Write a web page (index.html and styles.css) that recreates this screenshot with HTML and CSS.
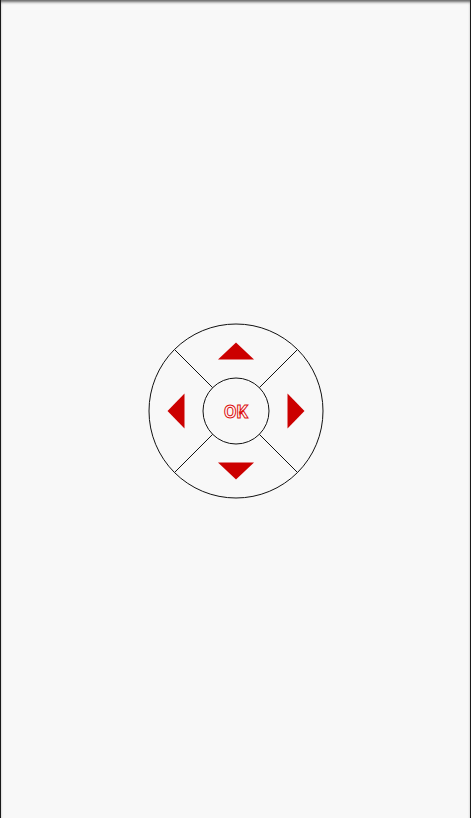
FILE: index.html
```html
<!DOCTYPE html>
<html lang="en">
<head>
    <meta charset="UTF-8">
    <meta name="viewport" content="width=device-width, initial-scale=1.0">
    <title>Remote</title>
    <link rel="stylesheet" href="styles.css">
</head>
<body>
    <div class="screen">
        <!-- direction pad -->
        <svg class="dpad" width="180" height="180" viewBox="0 0 180 180">
            <circle class="ring" cx="90" cy="90" r="87"/>
            <line class="ring" x1="66.7" y1="66.7" x2="28.5" y2="28.5"/>
            <line class="ring" x1="113.3" y1="66.7" x2="151.5" y2="28.5"/>
            <line class="ring" x1="66.7" y1="113.3" x2="28.5" y2="151.5"/>
            <line class="ring" x1="113.3" y1="113.3" x2="151.5" y2="151.5"/>
            <circle class="ring" cx="90" cy="90" r="33"/>
            <polygon class="arrow" points="90,21.5 108,38.5 72,38.5"/>
            <polygon class="arrow" points="90,158.5 108,141.5 72,141.5"/>
            <polygon class="arrow" points="21.5,90 38.5,72.5 38.5,107.5"/>
            <polygon class="arrow" points="158.5,90 141.5,72.5 141.5,107.5"/>
            <text class="ok" x="90" y="96.5" text-anchor="middle">OK</text>
        </svg>
    </div>
</body>
</html>
```

FILE: styles.css
```css
html, body {
    margin: 0;
    padding: 0;
}
body {
    background-color: #f8f8f8;
}
.screen {
    box-sizing: border-box;
    width: 471px;
    height: 818px;
    padding-top: 3px;
    border-left: 1px solid #1a1a1a;
    border-right: 1px solid #1a1a1a;
    box-shadow: inset 0 3px 3px -1px rgba(0, 0, 0, 0.6);
    display: flex;
    justify-content: center;
    align-items: center;
}
.dpad {
    display: block;
}
.ring {
    fill: none;
    stroke: #111;
    stroke-width: 1;
}
.arrow {
    fill: #cc0000;
}
.ok {
    font-family: Roboto, "Liberation Sans", sans-serif;
    font-size: 18px;
    font-weight: bold;
    fill: #fff;
    stroke: #dd1111;
    stroke-width: 1;
}
```
